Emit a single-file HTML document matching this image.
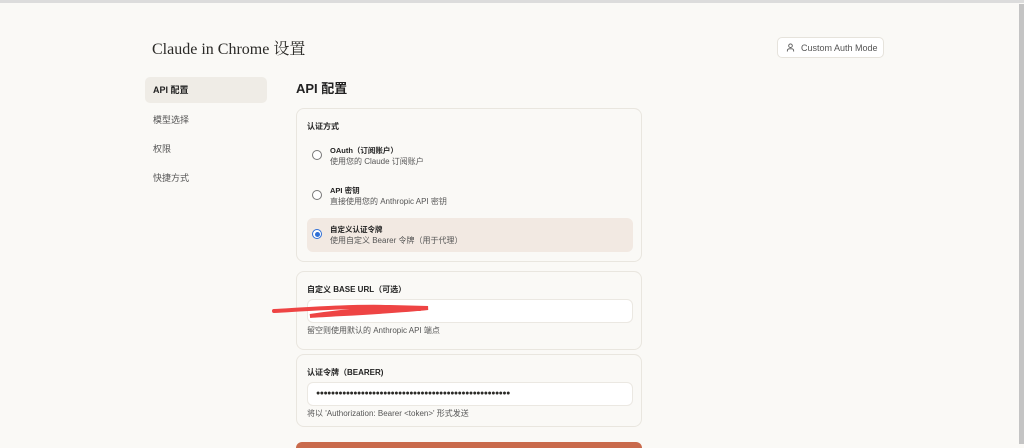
<!DOCTYPE html>
<html><head><meta charset="utf-8"><style>
*{box-sizing:border-box;margin:0;padding:0}
body{width:1024px;height:444px;overflow:hidden;background:#faf9f6;font-family:"Liberation Sans","Noto Sans CJK SC",sans-serif;color:#2b2a27;position:relative}
.topline{position:absolute;left:0;top:0;width:1024px;height:3px;background:#dcdcdc}
.sb{position:absolute;right:0;top:4px;width:5px;height:440px;background:#c4c4c4}
.title{position:absolute;left:152px;top:36px;font-family:"Liberation Serif","Noto Serif CJK SC",serif;font-size:16px;color:#2b2a27}
.btn{position:absolute;left:777px;top:37px;width:107px;height:21px;background:#fff;border:1px solid #e6e3dc;border-radius:5px;font-size:9px;color:#555;display:flex;align-items:center;padding-left:8px}
.btn svg{margin-right:6px}
.nav{position:absolute;left:145px;font-size:9px;color:#555;padding-left:8px}
.nav.act{top:77px;width:122px;height:26px;background:#efece6;border-radius:5px;color:#222;font-weight:bold;line-height:26px}
h2{position:absolute;left:296px;top:78px;font-size:13px;font-weight:bold;color:#222}
.card{position:absolute;left:296px;width:346px;border:1px solid #e9e6df;border-radius:8px;background:#faf9f6}
.lbl{position:absolute;left:10px;font-size:8px;font-weight:bold;color:#222}
.opt{position:absolute;left:10px;width:326px;height:34px;border-radius:6px}
.opt.sel{background:#f2e9e2}
.radio{position:absolute;left:5px;top:11px;width:10px;height:10px;border:1px solid #777;border-radius:50%;background:#fff}
.radio.on{border-color:#2f6fd6}
.radio.on::after{content:"";position:absolute;left:1.5px;top:1.5px;width:5px;height:5px;border-radius:50%;background:#2f6fd6}
.ot{position:absolute;left:23px;top:6px;font-size:7.5px;font-weight:bold;color:#222}
.od{position:absolute;left:23px;top:17px;font-size:8px;color:#555}
.inp{position:absolute;left:10px;width:326px;height:24px;background:#fff;border:1px solid #ebe8e2;border-radius:6px;font-size:8px;padding-left:8px;line-height:22px}
.hint{position:absolute;left:10px;font-size:8px;color:#555}
</style></head><body>
<div class="topline"></div><div class="sb"></div>
<div class="title">Claude in Chrome 设置</div>
<div class="btn"><svg width="9" height="9" viewBox="0 0 10 10" fill="none" stroke="#555" stroke-width="1"><circle cx="5" cy="3" r="2"/><path d="M1.5 9.5v-1a2 2 0 0 1 2-2h3a2 2 0 0 1 2 2v1"/></svg>Custom Auth Mode</div>
<div class="nav act">API 配置</div>
<div class="nav" style="top:113px">模型选择</div>
<div class="nav" style="top:142px">权限</div>
<div class="nav" style="top:171px">快捷方式</div>
<h2>API 配置</h2>
<div class="card" style="top:108px;height:154px">
<div class="lbl" style="top:12px">认证方式</div>
<div class="opt" style="top:30px"><div class="radio"></div><div class="ot">OAuth（订阅账户）</div><div class="od">使用您的 Claude 订阅账户</div></div>
<div class="opt" style="top:70px"><div class="radio"></div><div class="ot">API 密钥</div><div class="od">直接使用您的 Anthropic API 密钥</div></div>
<div class="opt sel" style="top:109px"><div class="radio on"></div><div class="ot">自定义认证令牌</div><div class="od">使用自定义 Bearer 令牌（用于代理）</div></div>
</div>
<div class="card" style="top:271px;height:79px">
<div class="lbl" style="top:12px">自定义 BASE URL（可选）</div>
<div class="inp" style="top:27px"></div>
<div class="hint" style="top:53px">留空则使用默认的 Anthropic API 端点</div>
</div>
<svg style="position:absolute;left:270px;top:302px" width="165" height="18"><path d="M4 9 C40 7 80 4 120 5 L158 6 C120 10 70 12 40 14 C80 8 110 6 150 7" stroke="#ee4444" stroke-width="4" fill="none" stroke-linecap="round"/></svg>
<div class="card" style="top:354px;height:73px">
<div class="lbl" style="top:12px">认证令牌（BEARER)</div>
<div class="inp" style="top:27px;font-size:7px;letter-spacing:-0.5px">●●●●●●●●●●●●●●●●●●●●●●●●●●●●●●●●●●●●●●●●●●●●●●●●●●●●</div>
<div class="hint" style="top:53px">将以 'Authorization: Bearer &lt;token&gt;' 形式发送</div>
</div>
<div style="position:absolute;left:296px;top:442px;width:346px;height:6px;background:#c96a4c;border-radius:6px 6px 0 0"></div>
</body></html>
